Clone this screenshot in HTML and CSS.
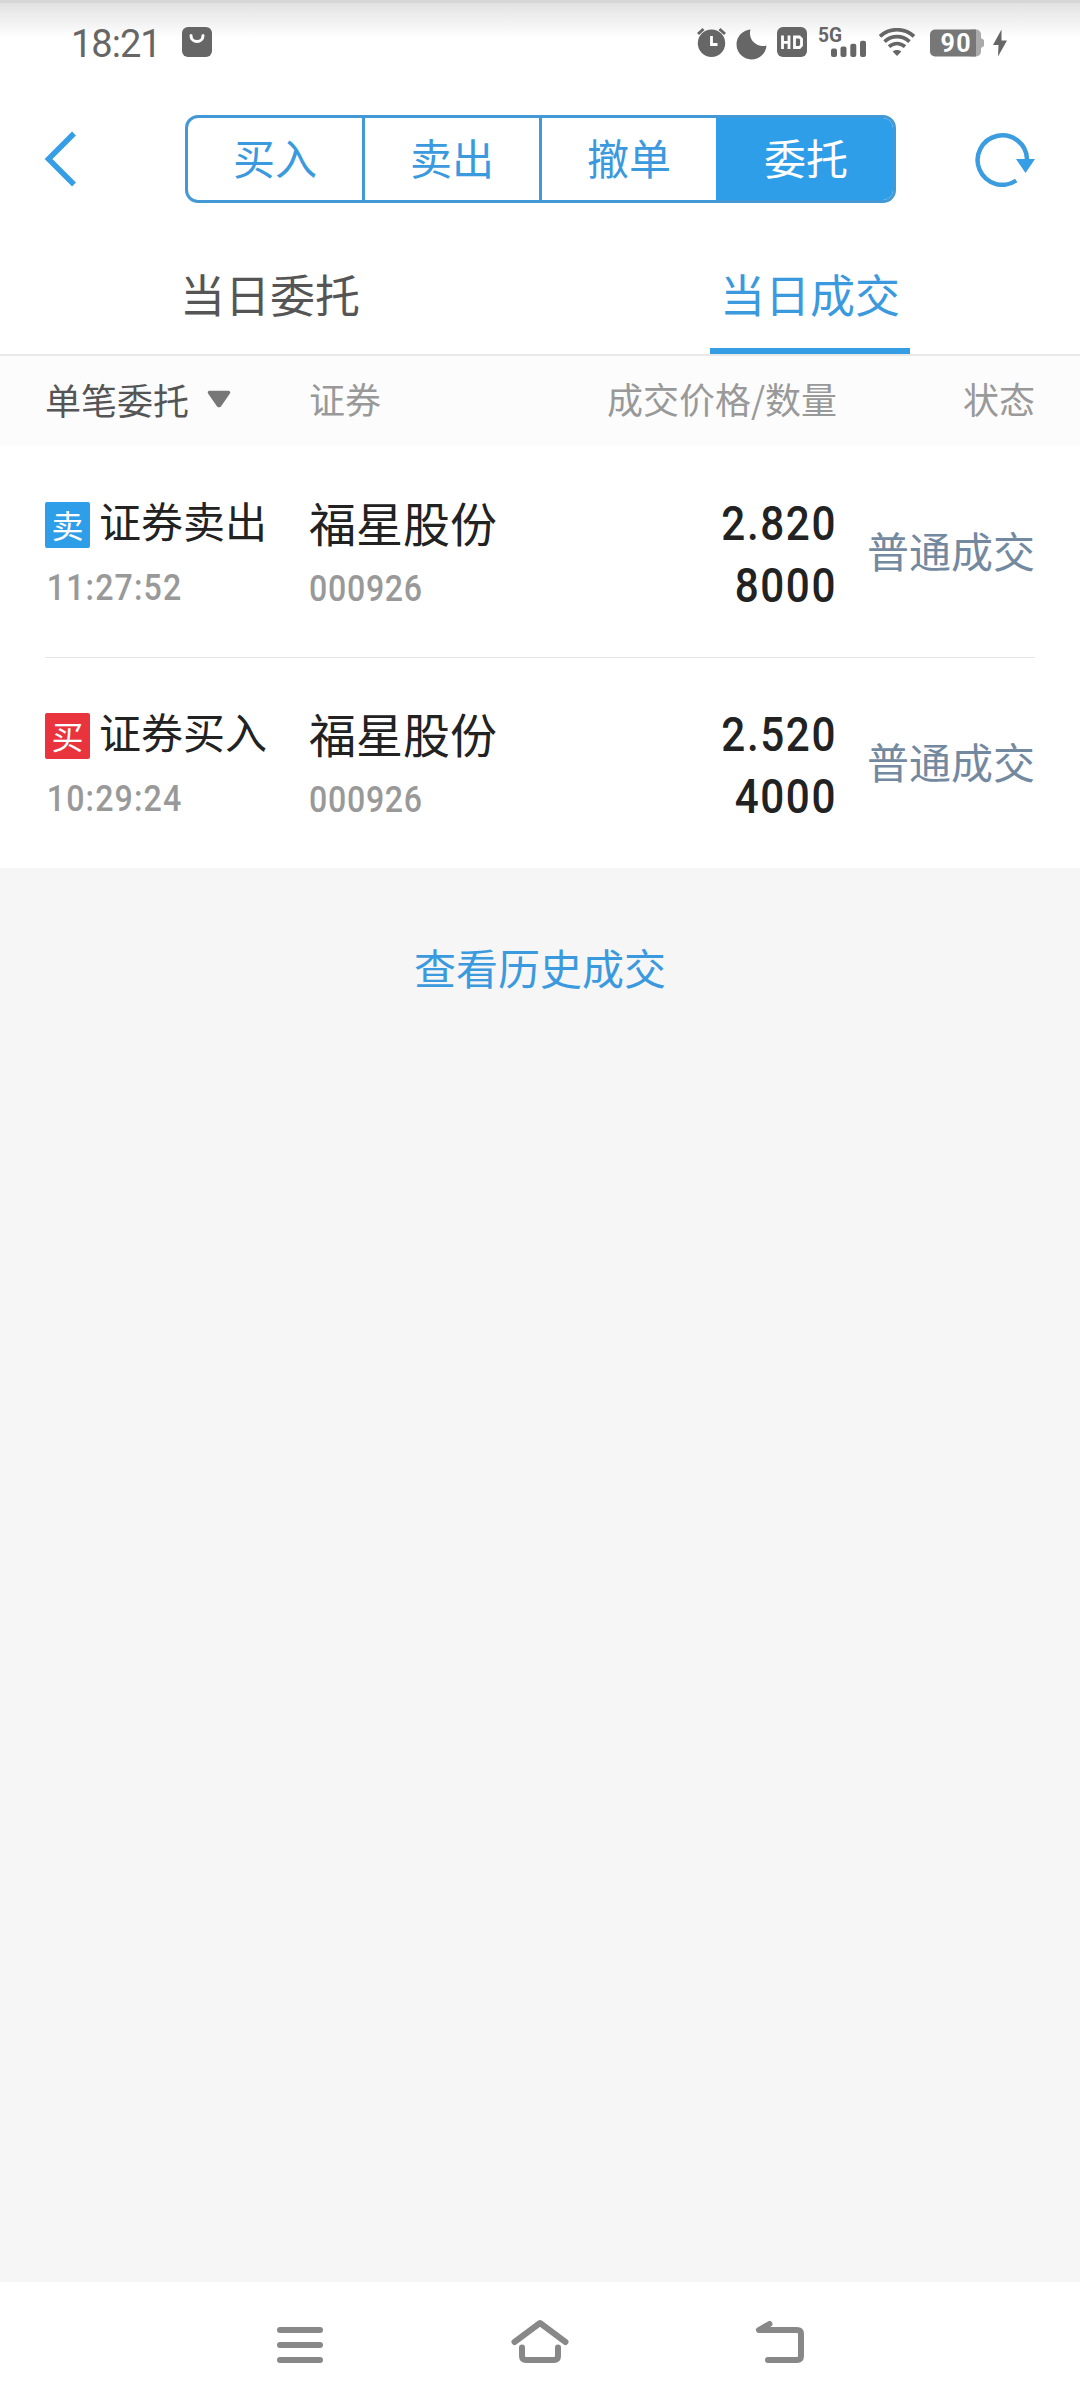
FILE: index.html
```html
<!DOCTYPE html>
<html lang="zh-CN">
<head>
  <meta charset="UTF-8">
  <meta name="viewport" content="width=device-width, initial-scale=1.0">
  <title>当日成交</title>
  <link rel="stylesheet" href="styles.css">
</head>
<body>
  <div class="status-bar">
    <span class="clock">18:21</span>
    <svg class="icon-bag" width="30" height="30" viewBox="0 0 30 30">
      <rect width="30" height="30" rx="6" fill="#666"/>
      <path d="M9 8.500C9 16.500 21 16.500 21 8.500" fill="none" stroke="#fff" stroke-width="3" stroke-linecap="round"/>
    </svg>
    <div class="status-icons">
      <svg class="icon-alarm" width="30" height="30" viewBox="0 0 30 30">
        <circle cx="14.500" cy="16.300" r="13.700" fill="#666"/>
        <path d="M1 7L6.500 2M28 7L22.500 2" stroke="#666" stroke-width="3"/>
        <path d="M14.500 9v8.500h6" fill="none" stroke="#fff" stroke-width="2.800"/>
      </svg>
      <svg class="icon-moon" width="31" height="31" viewBox="0 0 31 31">
        <path d="M14.500 0.500A15 15 0 1 0 30.500 16.500C21 19.500 11.500 10.500 14.500 0.500Z" fill="#666"/>
      </svg>
      <svg class="icon-hd" width="30" height="30" viewBox="0 0 30 30">
        <rect width="30" height="30" rx="6" fill="#666"/>
        <path d="M5.500 8.500v13.500M12 8.500v13.500M5.500 15.300h6.500M17.500 10h5l2 2v6.500l-2 2h-5z" fill="none" stroke="#fff" stroke-width="2.800"/>
      </svg>
      <svg class="icon-net" width="48" height="40" viewBox="0 -10 48 40">
        <text class="net-label" x="0" y="14.500" textLength="24" lengthAdjust="spacingAndGlyphs">5G</text>
        <rect x="13" y="21.500" width="6" height="8.500" rx="2" fill="#666"/>
        <rect x="22.500" y="19.500" width="6" height="10.500" rx="2" fill="#666"/>
        <rect x="32.300" y="16.700" width="6" height="13.300" rx="2" fill="#666"/>
        <rect x="42" y="13.700" width="6" height="16.300" rx="2" fill="#666"/>
      </svg>
      <svg class="icon-wifi" width="36" height="28" viewBox="0 0 36 28">
        <g fill="none" stroke="#666" stroke-width="3.700">
          <path d="M1 8.300C11 -0.500 25 -0.500 35 8.300"/>
          <path d="M5.500 13.600C13 7 23 7 30.500 13.600"/>
          <path d="M10 18.700C15 14.500 21 14.500 26 18.700"/>
        </g>
        <path d="M13.700 23.500C16 21.500 20 21.500 22.300 23.500L18 28Z" fill="#666"/>
      </svg>
      <svg class="icon-battery" width="54" height="28" viewBox="0 0 54 28">
        <path d="M40 0.500h6a5 5 0 0 1 5 5v3.500l3 2v6l-3 2v3.500a5 5 0 0 1-5 5h-6z" fill="#aaa"/>
        <path d="M5 0.500h41v27H5a5 5 0 0 1-5-5v-17a5 5 0 0 1 5-5z" fill="#777"/>
        <text class="battery-label" x="10.500" y="22.800" textLength="30">90</text>
      </svg>
      <svg class="icon-bolt" width="14" height="28" viewBox="0 0 14 28">
        <path d="M8.500 0.500L0 16h5.500L5 27.500L14 11.500H8.500Z" fill="#666"/>
      </svg>
    </div>
  </div>

  <header class="topbar">
    <svg class="back" width="34" height="58" viewBox="0 0 34 58">
      <path d="M30 3.500L4.500 29L30 54.500" fill="none" stroke="#359ee6" stroke-width="5.500"/>
    </svg>
    <nav class="segment">
      <a class="segment-item">买入</a>
      <a class="segment-item">卖出</a>
      <a class="segment-item">撤单</a>
      <a class="segment-item active">委托</a>
    </nav>
    <svg class="refresh" width="60" height="56" viewBox="0 0 60 56">
      <path d="M41.200 49.500A24.700 24.700 0 1 1 52 28" fill="none" stroke="#3b9cdf" stroke-width="4.500"/>
      <path d="M41 28h19l-9.500 14z" fill="#359ee6"/>
    </svg>
  </header>

  <div class="tabs">
    <a class="tab">当日委托</a>
    <a class="tab active">当日成交</a>
  </div>

  <div class="list-head">
    <span class="filter">单笔委托
      <svg width="24" height="18" viewBox="0 0 24 18">
        <path d="M2.500 2.500h19L12.500 15.500h-1z" fill="#777" stroke="#777" stroke-width="3.500" stroke-linejoin="round"/>
      </svg>
    </span>
    <span>证券</span>
    <span class="right">成交价格/数量</span>
    <span class="right">状态</span>
  </div>

  <main class="list">
    <div class="row">
      <div class="type">
        <div class="type-name"><i class="badge sell">卖</i><span>证券卖出</span></div>
        <div class="time">11:27:52</div>
      </div>
      <div class="stock">
        <div class="stock-name">福星股份</div>
        <div class="code">000926</div>
      </div>
      <div class="deal">
        <div>2.820</div>
        <div>8000</div>
      </div>
      <div class="state">普通成交</div>
    </div>
    <div class="row">
      <div class="type">
        <div class="type-name"><i class="badge buy">买</i><span>证券买入</span></div>
        <div class="time">10:29:24</div>
      </div>
      <div class="stock">
        <div class="stock-name">福星股份</div>
        <div class="code">000926</div>
      </div>
      <div class="deal">
        <div>2.520</div>
        <div>4000</div>
      </div>
      <div class="state">普通成交</div>
    </div>
  </main>

  <div class="history">
    <a class="history-link">查看历史成交</a>
  </div>

  <footer class="navbar">
    <svg width="60" height="50" viewBox="0 0 60 50">
      <path d="M10 13h40M10 28h40M10 43h40"/>
    </svg>
    <svg width="60" height="50" viewBox="0 0 60 50">
      <path d="M4.500 25L30 6L55.500 25M12 30.500v8.500q0 4 4 4h28q4 0 4-4v-8.500"/>
    </svg>
    <svg width="60" height="50" viewBox="0 0 60 50">
      <path d="M19.500 7L9 13h38q4 0 4 4v22q0 4-4 4H18"/>
    </svg>
  </footer>
</body>
</html>
```
FILE: styles.css
```css
* {
  box-sizing: border-box;
}
body {
  margin: 0;
  height: 2408px;
  display: flex;
  flex-direction: column;
  background: #fff;
  color: #222;
  font-family: "Noto Sans CJK SC", sans-serif;
  font-size: 42px;
}
svg { display: block; }

/* system status bar */
.status-bar {
  display: flex;
  align-items: flex-start;
  height: 104px;
  padding: 24px 73px 0 71px;
  border-top: 3px solid #d6d6d6;
  background: linear-gradient(#e2e2e2, #fff 35px);
}
.clock {
  width: 111px;
  font-family: Roboto, sans-serif;
  font-size: 38px;
  line-height: 35px;
  letter-spacing: -1px;
  color: #666;
}
.status-icons {
  display: flex;
  align-items: flex-start;
  margin-left: auto;
}
.icon-moon { margin: 2px 0 0 9px; }
.icon-hd { margin-left: 10px; }
.icon-net { margin: -10px 0 0 11px; }
.icon-wifi { margin: 1px 0 0 13px; }
.icon-battery { margin: 2px 0 0 15px; }
.icon-bolt { margin: 2px 0 0 9px; }
.net-label {
  font: bold 20px Roboto, sans-serif;
  fill: #666;
}
.battery-label {
  font: bold 25px Roboto, sans-serif;
  fill: #fff;
}

/* top bar */
.topbar {
  display: flex;
  justify-content: space-between;
  align-items: center;
  height: 110px;
  padding: 0 45px 0 44px;
}
.segment {
  display: flex;
  width: 711px;
  height: 88px;
  margin: 0 33px 0 16px;
  border: 3px solid #4299d6;
  border-radius: 13px;
  background: #fff;
  overflow: hidden;
}
.segment-item {
  flex: 1;
  line-height: 78px;
  text-align: center;
  color: #3b9ade;
}
.segment-item + .segment-item { border-left: 3px solid #4299d6; }
.segment-item.active {
  background: #2f9ee9;
  border-color: #2f9ee9;
  color: #fff;
}
.back { margin-right: 45px; }

/* tabs */
.tabs {
  display: flex;
  height: 142px;
  border-bottom: 2px solid #e8e8e8;
}
.tab {
  display: flex;
  justify-content: center;
  flex: 1;
  font-size: 45px;
  line-height: 159px;
  color: #555;
}
.tab.active {
  color: #3b9ade;
  background: linear-gradient(#359de4, #359de4) center bottom / 200px 6px no-repeat;
}

/* list */
.list-head, .row {
  display: grid;
  grid-template-columns: 264px 1fr 1fr 198px;
}
.list-head {
  height: 90px;
  padding: 0 45px;
  background: #fcfcfc;
  font-size: 36px;
  line-height: 84px;
  color: #999;
}
.filter {
  display: flex;
  align-items: center;
  gap: 18px;
  height: 86px;
  color: #555;
}
.right { text-align: right; }
.row {
  height: 211px;
  margin: 0 45px;
  padding-top: 56px;
}
.row + .row {
  border-top: 1px solid #e6e6e6;
  padding-top: 55px;
}
.type-name {
  display: flex;
  height: 46px;
  gap: 9px;
  line-height: 35px;
}
.badge {
  width: 45px;
  height: 46px;
  border-radius: 2px;
  font-size: 32px;
  font-style: normal;
  line-height: 44px;
  text-align: center;
  color: #fff;
}
.sell { background: #2f9ee9; }
.buy { background: #e9343e; }

/* narrow digits */
.time, .code {
  font-family: Roboto, sans-serif;
  font-size: 36.5px;
  font-weight: 500;
  line-height: 40px;
  color: #999;
  transform: scaleX(0.88);
  transform-origin: left;
}
.time {
  margin-top: 20px;
  padding-left: 2px;
  letter-spacing: 1.3px;
}
.stock-name {
  font-size: 47px;
  line-height: 40px;
}
.code {
  margin-top: 27px;
  letter-spacing: 0.8px;
}
.deal {
  margin-top: -9px;
  font-family: Roboto, sans-serif;
  font-size: 48px;
  font-weight: 500;
  line-height: 62px;
  letter-spacing: 1.8px;
  text-align: right;
  transform: scaleX(0.88);
  transform-origin: right;
}
.state {
  margin-top: 17px;
  line-height: 62px;
  text-align: right;
  color: #73899f;
}

/* history link */
.history {
  flex: 1;
  padding-top: 68px;
  background: #f6f6f6;
  text-align: center;
  line-height: 62px;
}
.history-link { color: #3b9ade; }

/* system navigation */
.navbar {
  display: flex;
  justify-content: center;
  gap: 180px;
  height: 126px;
  padding-top: 35px;
}
.navbar path {
  fill: none;
  stroke: #888;
  stroke-width: 6;
  stroke-linecap: round;
  stroke-linejoin: round;
}
```
